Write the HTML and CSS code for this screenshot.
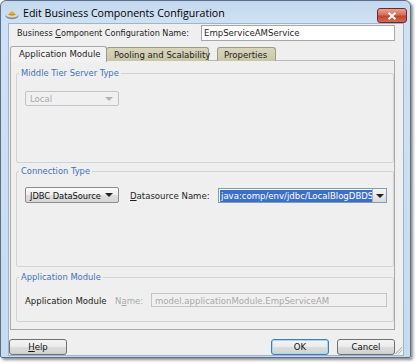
FILE: index.html
```html
<!DOCTYPE html>
<html>
<head>
<meta charset="utf-8">
<link rel="stylesheet" href="styles.css">
</head>
<body>
<div class="window">
  <div class="titlebar">
    <svg class="app-icon" width="14" height="13" viewBox="0 0 14 13">
      <ellipse cx="7" cy="9" rx="6.5" ry="3.2" fill="#8a8f96"/>
      <ellipse cx="7" cy="8" rx="6" ry="2.6" fill="#d9dde2"/>
      <path d="M3.5 7.5 Q7 1 10.5 7.5 Z" fill="#e9b92f"/>
      <ellipse cx="7" cy="7.6" rx="3.6" ry="1.1" fill="#c99a1c"/>
    </svg>
    <span class="title">Edit Business Components Configuration</span>
    <div class="close">
      <svg width="10" height="8" viewBox="0 0 10 8"><path d="M1.5 0.8 L8.5 7.2 M8.5 0.8 L1.5 7.2" stroke="#fff" stroke-width="2"/></svg>
    </div>
  </div>
  <div class="client">
    <div class="name-row">
      <span class="lbl top-lbl">Business <u>C</u>omponent Configuration Name:</span>
      <div class="field name-field">EmpServiceAMService</div>
    </div>
    <div class="tabs">
      <div class="tab active">Application Module</div>
      <div class="tab inactive pool">Pooling and Scalability</div>
      <div class="tab inactive props">Properties</div>
    </div>
    <div class="panel">
      <fieldset class="group g1">
        <legend>Middle Tier Server Type</legend>
        <div class="combo disabled">
          <span class="ctext">Local</span>
          <span class="arrow dim"></span>
        </div>
      </fieldset>
      <fieldset class="group g2">
        <legend>Connection Type</legend>
        <div class="row">
          <div class="combo btn">
            <span class="ctext">JDBC DataSource</span>
            <span class="arrow"></span>
          </div>
          <span class="lbl ds-lbl"><u>D</u>atasource Name:</span>
          <div class="editcombo">
            <span class="sel">java:comp/env/jdbc/LocalBlogDBDS</span>
            <span class="arrowbtn"><span class="arrow"></span></span>
          </div>
        </div>
      </fieldset>
      <fieldset class="group g3">
        <legend>Application Module</legend>
        <div class="row">
          <span class="lbl am-lbl">Application Module</span>
          <span class="lbl dimtext">N<u>a</u>me:</span>
          <div class="field disabled-field">model.applicationModule.EmpServiceAM</div>
        </div>
      </fieldset>
    </div>
    <div class="buttons">
      <div class="button"><u>H</u>elp</div>
      <div class="spacer"></div>
      <div class="button default">OK</div>
      <div class="button">Cancel</div>
    </div>
    <div class="grip"></div>
  </div>
</div>
</body>
</html>
```
FILE: styles.css
```css
html, body {
  margin: 0;
  padding: 0;
  background: #ffffff;
}
body {
  width: 418px;
  height: 363px;
  overflow: hidden;
  font-family: "DejaVu Sans Condensed", "DejaVu Sans", sans-serif;
  font-stretch: condensed;
  font-size: 9.5px;
  color: #1e1e1e;
}
.window {
  width: 411px;
  height: 358px;
  box-sizing: border-box;
  border: 1px solid #5b6f86;
  border-radius: 6px 6px 2px 2px;
  background: linear-gradient(180deg, #c3d8ee 0px, #cfe1f4 22px, #c6dbf1 100%);
  box-shadow: 2px 2px 3px rgba(0,0,0,0.45);
  display: flex;
  flex-direction: column;
  padding: 0 6px 4px 7px;
}
.titlebar {
  height: 21px;
  display: flex;
  align-items: center;
  padding-top: 1px;
}
.app-icon {
  margin-left: -3px;
  margin-right: 4px;
  margin-top: 1px;
}
.title {
  font-family: "Open Sans", "Noto Sans", sans-serif;
  font-stretch: normal;
  font-size: 10.6px;
  color: #000;
  flex: 1;
  padding-top: 1px;
}
.close {
  width: 28px;
  height: 13px;
  margin-top: 6px;
  margin-right: -3px;
  border: 1px solid #6d2a2a;
  border-radius: 3px;
  background: linear-gradient(180deg, #e8a293 0%, #d66f5c 45%, #c4432c 55%, #d26a52 100%);
  display: flex;
  align-items: center;
  justify-content: center;
}
.client {
  flex: 1;
  position: relative;
  background: #efefef;
  border: 1px solid #9fb3c9;
  display: flex;
  flex-direction: column;
  padding: 1px 8px 0 0;
}
.name-row {
  display: flex;
  align-items: center;
  justify-content: space-between;
  padding-left: 8px;
  height: 16px;
}
.top-lbl {
  font-size: 9px;
  white-space: nowrap;
}
.field {
  box-sizing: border-box;
  height: 16px;
  background: #fff;
  border: 1px solid #a4a8ad;
  padding: 1px 3px;
  line-height: 12px;
  white-space: nowrap;
  overflow: hidden;
}
.name-field {
  width: 194px;
  font-size: 9.5px;
  padding-left: 2px;
}
.tabs {
  display: flex;
  margin-top: 5px;
  padding-left: 1px;
  height: 15px;
  position: relative;
  z-index: 1;
}
.tab {
  box-sizing: border-box;
  height: 15px;
  border: 1px solid #9a9a8a;
  border-bottom: none;
  border-radius: 3px 3px 0 0;
  padding: 1px 6px 0;
  line-height: 12px;
  white-space: nowrap;
}
.tab.active {
  width: 97px;
  background: #f2f2f2;
  border-color: #a7a7a7;
  height: 16px;
  padding-left: 8px;
}
.tab.inactive {
  background: linear-gradient(180deg, #d9d6bc, #c9c6a8);
  margin-top: 1px;
  height: 14px;
}
.tab.pool {
  width: 103px;
  padding-left: 7px;
  margin-left: -1px;
}
.tab.props {
  width: 59px;
  margin-left: 8px;
  padding-left: 6px;
}
.panel {
  box-sizing: border-box;
  height: 270px;
  margin-left: 1px;
  margin-top: -1px;
  background: #efefef;
  border: 1px solid #a9a9a9;
  border-top-color: #b8b8b8;
  padding: 6px 0 0 5px;
  display: flex;
  flex-direction: column;
}
.group {
  box-sizing: border-box;
  width: 378px;
  margin: 0;
  padding: 0 0 0 8px;
  border: 1px solid #d3d3d3;
  border-radius: 2px;
  min-width: 0;
}
.group legend {
  color: #4470b8;
  padding: 0 2px;
  margin-left: -6px;
  font-size: 9.3px;
  line-height: 12px;
}
.g1 {
  height: 96px;
}
.g2 {
  height: 102px;
  margin-top: 2px;
}
.g3 {
  height: 51px;
  margin-top: 4px;
}
.combo {
  box-sizing: border-box;
  width: 94px;
  height: 15px;
  display: flex;
  align-items: center;
  justify-content: space-between;
  padding: 0 5px 0 4px;
  border-radius: 2px;
  white-space: nowrap;
}
.combo.disabled {
  margin-top: 12px;
  border: 1px solid #c4c4c4;
  color: #a9a9a9;
  background: #f0f0f0;
}
.combo.btn {
  height: 16px;
  border: 1px solid #8d8d8d;
  background: linear-gradient(180deg, #fbfbfb 0%, #efefef 50%, #dedede 51%, #d6d6d6 100%);
  color: #111;
  font-size: 9.2px;
}
.arrow {
  width: 0;
  height: 0;
  border-left: 4px solid transparent;
  border-right: 4px solid transparent;
  border-top: 4px solid #222;
}
.arrow.dim {
  border-top-color: #b5b5b5;
}
.row {
  display: flex;
  align-items: center;
}
.g2 .row {
  margin-top: 10px;
}
.ds-lbl {
  margin-left: 11px;
  width: 88px;
}
.editcombo {
  box-sizing: border-box;
  width: 169px;
  height: 15px;
  display: flex;
  align-items: center;
  border: 1px solid #7f9db9;
  background: #fff;
  padding-left: 1px;
  margin-top: 1px;
}
.sel {
  background: #3b6fc9;
  color: #fff;
  line-height: 12px;
  padding: 0 1px;
  white-space: nowrap;
  overflow: hidden;
}
.arrowbtn {
  margin-left: auto;
  width: 13px;
  height: 13px;
  display: flex;
  align-items: center;
  justify-content: center;
  background: linear-gradient(180deg, #f6f6f6, #dadada);
  border-left: 1px solid #b0b0b0;
}
.g3 .row {
  margin-top: 10px;
}
.am-lbl {
  width: 90px;
  color: #1a1a1a;
}
.dimtext {
  color: #a9a9a9;
  width: 36px;
}
.disabled-field {
  width: 236px;
  height: 14px;
  border-color: #c5c5c5;
  background: #f0f0f0;
  color: #a9a9a9;
  line-height: 11px;
}
.buttons {
  display: flex;
  margin-top: 9px;
  gap: 8px;
}
.button {
  box-sizing: border-box;
  width: 58px;
  height: 16px;
  border: 1px solid #707070;
  border-radius: 3px;
  background: linear-gradient(180deg, #f4f4f4 0%, #ebebeb 50%, #dddddd 51%, #d0d0d0 100%);
  text-align: center;
  line-height: 13px;
  color: #111;
}
.button.default {
  border-color: #3c7fb1;
  box-shadow: inset 0 0 0 1px #a6d7f4;
}
.spacer {
  flex: 1;
}
.grip {
  position: absolute;
  right: 1px;
  bottom: 1px;
  width: 8px;
  height: 8px;
  background: linear-gradient(135deg, transparent 55%, #b8b8b8 56%, #b8b8b8 62%, transparent 63%, transparent 72%, #b8b8b8 73%, #b8b8b8 79%, transparent 80%);
}
```
